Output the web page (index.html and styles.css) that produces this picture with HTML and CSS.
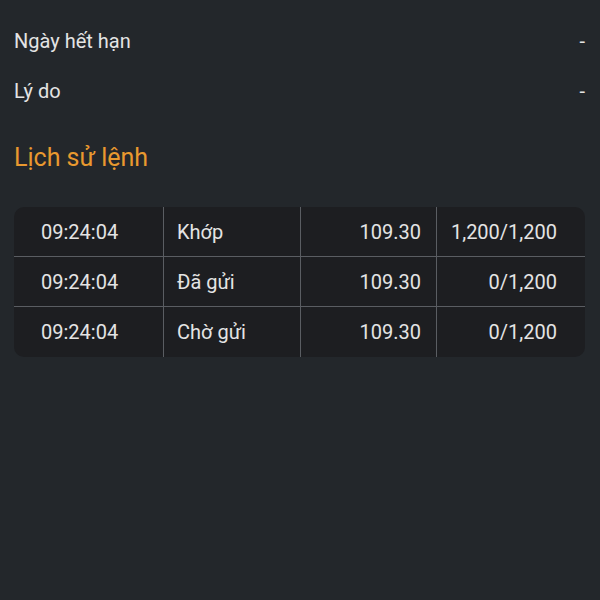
FILE: index.html
```html
<!DOCTYPE html>
<html lang="vi">
<head>
<meta charset="utf-8">
<link rel="stylesheet" href="styles.css">
</head>
<body>
<div class="page">
  <div class="info-row"><span class="label">Ngày hết hạn</span><span class="value">-</span></div>
  <div class="info-row"><span class="label">Lý do</span><span class="value">-</span></div>
  <h2 class="section-title">Lịch sử lệnh</h2>
  <div class="history">
    <div class="h-row">
      <div class="cell c-time">09:24:04</div>
      <div class="cell c-status">Khớp</div>
      <div class="cell c-price">109.30</div>
      <div class="cell c-qty">1,200/1,200</div>
    </div>
    <div class="h-row">
      <div class="cell c-time">09:24:04</div>
      <div class="cell c-status">Đã gửi</div>
      <div class="cell c-price">109.30</div>
      <div class="cell c-qty">0/1,200</div>
    </div>
    <div class="h-row">
      <div class="cell c-time">09:24:04</div>
      <div class="cell c-status">Chờ gửi</div>
      <div class="cell c-price">109.30</div>
      <div class="cell c-qty">0/1,200</div>
    </div>
  </div>
</div>
</body>
</html>
```
FILE: styles.css
```css
html, body {
  margin: 0;
  padding: 0;
  background: #23272b;
  height: 100%;
}
body {
  font-family: Roboto, "Noto Sans", sans-serif;
  color: #e4e4e4;
}
.page {
  padding: 16px 15px 0 14px;
}
.info-row {
  display: flex;
  justify-content: space-between;
  align-items: center;
  height: 50px;
  font-size: 20px;
}
.value {
  color: #e4e4e4;
}
.section-title {
  margin: 27px 0 0 0;
  height: 30px;
  line-height: 30px;
  font-size: 25px;
  font-weight: 400;
  color: #e9992f;
}
.history {
  margin-top: 34px;
  background: #1d1e21;
  border-radius: 10px;
  overflow: hidden;
}
.h-row {
  display: grid;
  grid-template-columns: 149px 137px 136px 1fr;
  height: 49px;
  border-bottom: 1px solid #5a5d62;
}
.h-row:last-child {
  border-bottom: none;
  height: 50px;
}
.cell {
  display: flex;
  align-items: center;
  font-size: 20px;
  color: #e4e4e4;
}
.cell + .cell {
  border-left: 1px solid #5a5d62;
}
.c-time {
  padding-left: 27px;
}
.c-status {
  padding-left: 13px;
}
.c-price {
  justify-content: flex-end;
  padding-right: 15px;
}
.c-qty {
  justify-content: flex-end;
  padding-right: 28px;
}
```
